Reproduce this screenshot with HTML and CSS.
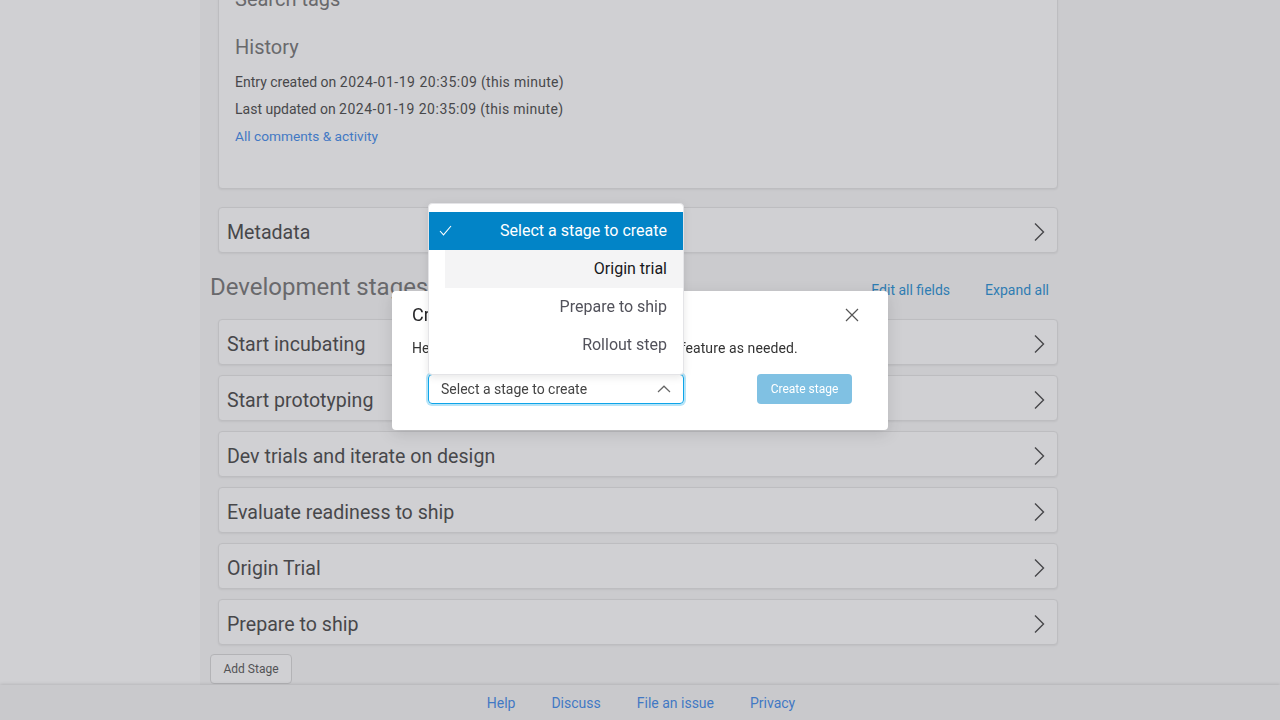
FILE: index.html
```html
<!DOCTYPE html>
<html lang="en">
<head>
<meta charset="utf-8">
<title>Feature</title>
<link rel="stylesheet" href="styles.css">
</head>
<body>
<div class="app">
  <aside class="sidebar"></aside>
  <main class="main">
    <div class="content">
      <section class="card info-card">
        <h3 class="section-title">Search tags</h3>
        <h3 class="section-title history">History</h3>
        <p class="meta-line first">Entry created on <span class="stamp">2024-01-19 20:35:09</span> <span class="relative">(this minute)</span></p>
        <p class="meta-line">Last updated on <span class="stamp">2024-01-19 20:35:09</span> <span class="relative">(this minute)</span></p>
        <p class="meta-line"><a class="link" href="#">All comments &amp; activity</a></p>
      </section>

      <div class="card stage metadata">
        <span class="stage-title">Metadata</span>
        <svg class="chev" width="12" height="20" viewBox="0 0 12 20"><polyline points="2,1.5 10.5,10 2,18.5" fill="none" stroke="#333" stroke-width="1.4"/></svg>
      </div>

      <div class="stages-header">
        <h2 class="stages-title">Development stages</h2>
        <div class="stage-actions">
          <a class="action-link" href="#">Edit all fields</a>
          <a class="action-link" href="#">Expand all</a>
        </div>
      </div>

      <div class="stage-list">
        <div class="card stage"><span class="stage-title">Start incubating</span><svg class="chev" width="12" height="20" viewBox="0 0 12 20"><polyline points="2,1.5 10.5,10 2,18.5" fill="none" stroke="#333" stroke-width="1.4"/></svg></div>
        <div class="card stage"><span class="stage-title">Start prototyping</span><svg class="chev" width="12" height="20" viewBox="0 0 12 20"><polyline points="2,1.5 10.5,10 2,18.5" fill="none" stroke="#333" stroke-width="1.4"/></svg></div>
        <div class="card stage"><span class="stage-title">Dev trials and iterate on design</span><svg class="chev" width="12" height="20" viewBox="0 0 12 20"><polyline points="2,1.5 10.5,10 2,18.5" fill="none" stroke="#333" stroke-width="1.4"/></svg></div>
        <div class="card stage"><span class="stage-title">Evaluate readiness to ship</span><svg class="chev" width="12" height="20" viewBox="0 0 12 20"><polyline points="2,1.5 10.5,10 2,18.5" fill="none" stroke="#333" stroke-width="1.4"/></svg></div>
        <div class="card stage"><span class="stage-title">Origin Trial</span><svg class="chev" width="12" height="20" viewBox="0 0 12 20"><polyline points="2,1.5 10.5,10 2,18.5" fill="none" stroke="#333" stroke-width="1.4"/></svg></div>
        <div class="card stage"><span class="stage-title">Prepare to ship</span><svg class="chev" width="12" height="20" viewBox="0 0 12 20"><polyline points="2,1.5 10.5,10 2,18.5" fill="none" stroke="#333" stroke-width="1.4"/></svg></div>
      </div>

      <button class="add-stage" type="button">Add Stage</button>
    </div>
  </main>
</div>

<footer class="footer">
  <a class="footer-link" href="#">Help</a>
  <a class="footer-link" href="#">Discuss</a>
  <a class="footer-link" href="#">File an issue</a>
  <a class="footer-link" href="#">Privacy</a>
</footer>

<div class="overlay"></div>

<div class="dialog-layer">
  <div class="dialog">
    <div class="dialog-header">
      <span class="dialog-title">Create new stage</span>
      <svg class="close" width="14" height="14" viewBox="0 0 14 14"><path d="M1 1 L13 13 M13 1 L1 13" stroke="#555" stroke-width="1.2" fill="none"/></svg>
    </div>
    <div class="dialog-body">
      <p class="dialog-text">Here you can add additional stages to this feature as needed.</p>
      <div class="dialog-row">
        <div class="select">
          <span class="select-value">Select a stage to create</span>
          <svg class="select-caret" width="14" height="8" viewBox="0 0 14 8"><polyline points="1,7 7,1.2 13,7" fill="none" stroke="#666" stroke-width="1.2"/></svg>
          <div class="listbox">
            <div class="option selected">
              <svg class="check" width="13" height="11" viewBox="0 0 13 11"><polyline points="1,6 4.5,9.8 12,1" fill="none" stroke="#fff" stroke-width="1.1"/></svg>
              <span>Select a stage to create</span>
            </div>
            <div class="option hovered"><span>Origin trial</span></div>
            <div class="option"><span>Prepare to ship</span></div>
            <div class="option"><span>Rollout step</span></div>
          </div>
        </div>
        <button class="create-btn" type="button">Create stage</button>
      </div>
    </div>
  </div>
</div>
</body>
</html>
```

FILE: styles.css
```css
* { box-sizing: border-box; }

html, body {
  margin: 0;
  padding: 0;
  width: 1280px;
  height: 720px;
  overflow: hidden;
}

body {
  font-family: Roboto, "Liberation Sans", Arial, sans-serif;
  color: #333;
  background: #f8f8f8;
}

.app {
  display: grid;
  grid-template-columns: 200px 1fr;
  height: 685px;
  overflow: hidden;
}

.sidebar {
  background: #ffffff;
}

.main {
  background: #f8f8f8;
  overflow: hidden;
}

.content {
  width: 848px;
  margin-left: 10px;
  margin-top: -30px;
}

.card {
  margin-left: 8px;
  width: 840px;
  background: #fff;
  border: 1px solid #e3e3e3;
  border-radius: 4px;
  box-shadow: 0 1px 2px rgba(0, 0, 0, 0.08);
}

.info-card {
  padding: 16px 16px 38px 16px;
}

.section-title {
  margin: 0;
  font-size: 20px;
  line-height: 24px;
  font-weight: 400;
  color: #666;
}

.section-title.history {
  margin-top: 24px;
}

.meta-line {
  margin: 0;
  font-size: 14px;
  line-height: 27px;
  color: #333;
}

.meta-line.first {
  margin-top: 10px;
}

.stamp {
  letter-spacing: 0.5px;
}

.relative {
  letter-spacing: 0.3px;
}

.link {
  color: #2b7de9;
  text-decoration: none;
  font-size: 13.7px;
}

.stage {
  height: 46px;
  display: flex;
  align-items: center;
  justify-content: space-between;
  padding: 4px 12px 0 8px;
}

.metadata {
  margin-top: 18px;
}

.stage-title {
  font-size: 19.6px;
  color: #333;
}

.chev {
  display: block;
}

.stages-header {
  display: flex;
  align-items: center;
  justify-content: space-between;
  margin-top: 20px;
  margin-bottom: 18px;
  padding-right: 9px;
}

.stages-title {
  margin: 0;
  font-size: 24px;
  line-height: 28px;
  font-weight: 400;
  color: #666;
}

.stage-actions {
  display: flex;
  gap: 35px;
  padding-top: 6px;
}

.action-link {
  font-size: 14px;
  color: #0b84cf;
  text-decoration: none;
}

.stage-list {
  display: flex;
  flex-direction: column;
  gap: 10px;
}

.add-stage {
  margin-top: 9px;
  height: 30px;
  width: 82px;
  padding: 0;
  font-family: inherit;
  font-size: 12px;
  color: #444;
  background: #fff;
  border: 1px solid #d4d4d4;
  border-radius: 4px;
}

.footer {
  height: 35px;
  background: #f5f5f5;
  box-shadow: 0 -1px 3px rgba(0, 0, 0, 0.15);
  display: flex;
  justify-content: center;
  align-items: center;
  gap: 36px;
  padding-left: 2px;
  position: relative;
}

.footer-link {
  font-size: 14px;
  color: #2b7de9;
  text-decoration: none;
}

.overlay {
  position: fixed;
  inset: 0;
  background: rgba(113, 113, 122, 0.33);
}

.dialog-layer {
  position: fixed;
  inset: 0;
  display: flex;
  align-items: center;
  justify-content: center;
}

.dialog {
  width: 496px;
  height: 139px;
  background: #fff;
  border-radius: 4px;
  box-shadow: 0 4px 16px rgba(0, 0, 0, 0.12);
}

.dialog-header {
  height: 48px;
  display: flex;
  align-items: center;
  justify-content: space-between;
  padding: 0 29px 0 20px;
}

.dialog-title {
  font-size: 18px;
  color: #27272a;
}

.close {
  display: block;
}

.dialog-body {
  padding: 0 20px;
}

.dialog-text {
  margin: 0;
  font-size: 14px;
  line-height: 18px;
  letter-spacing: 0.1px;
  color: #333;
}

.dialog-row {
  display: flex;
  justify-content: space-between;
  align-items: center;
  padding: 0 16px;
  margin-top: 17px;
}

.select {
  position: relative;
  width: 256px;
  height: 30px;
  border: 1px solid #0ea5e9;
  border-radius: 4px;
  box-shadow: 0 0 0 2px rgba(14, 165, 233, 0.3);
  display: flex;
  align-items: center;
  justify-content: space-between;
  padding: 0 12px 0 12px;
}

.select-value {
  font-size: 14px;
  color: #444;
}

.select-caret {
  display: block;
}

.listbox {
  position: absolute;
  left: -1px;
  right: -1px;
  bottom: 100%;
  background: #fff;
  border: 1px solid #e4e4e7;
  border-radius: 4px;
  box-shadow: 0 2px 8px rgba(0, 0, 0, 0.1);
  padding: 8px 0 10px 0;
}

.option {
  position: relative;
  height: 38px;
  display: flex;
  align-items: center;
  justify-content: flex-end;
  padding-right: 16px;
  font-size: 16px;
  color: #52525b;
}

.option.selected {
  background: #0284c7;
  color: #fff;
}

.option.hovered {
  margin-left: 16px;
  background: #f4f4f5;
  color: #18181b;
}

.check {
  position: absolute;
  left: 10px;
  top: 13px;
}

.create-btn {
  width: 95px;
  height: 30px;
  padding: 0;
  border: none;
  border-radius: 4px;
  background: #80c1e3;
  color: #fff;
  font-family: inherit;
  font-size: 12px;
}
```
